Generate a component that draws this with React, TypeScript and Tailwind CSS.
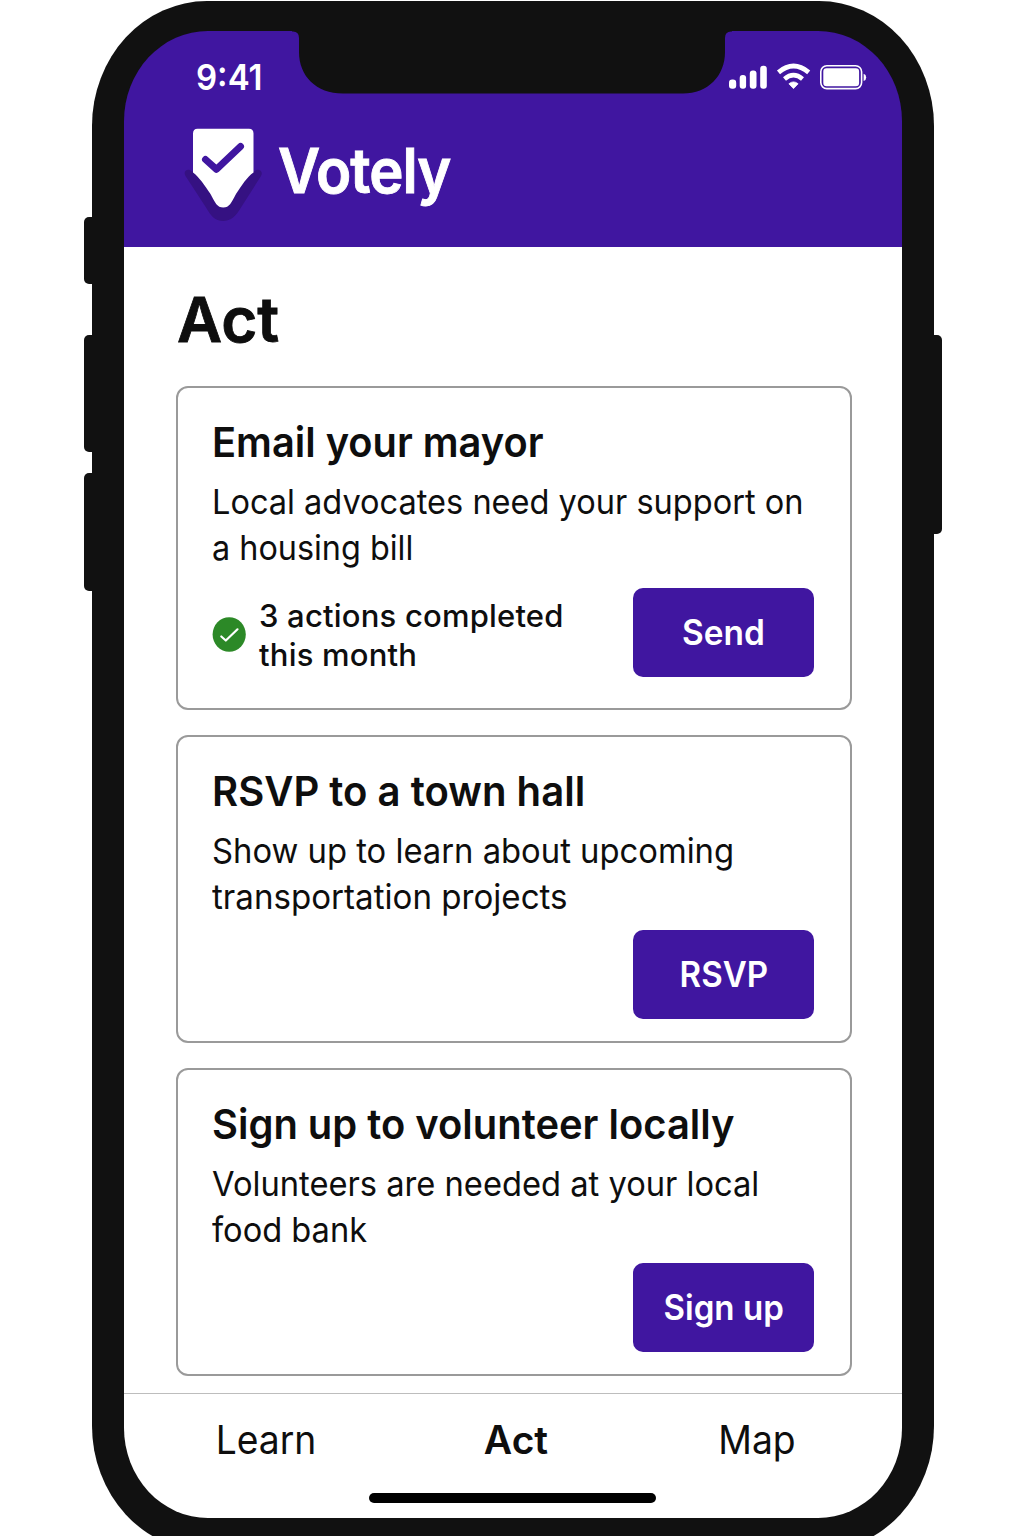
import React from "react";

function StatusIcons() {
  return (
    <svg className="block h-[30px] w-[140px]" viewBox="728 61 140 30" fill="none">
      <g fill="#fff">
        <rect x="729" y="78.5" width="7.2" height="9.3" rx="3.2" />
        <rect x="739.7" y="74" width="6.4" height="13.8" rx="3" />
        <rect x="749.8" y="69.5" width="6.7" height="18.3" rx="3" />
        <rect x="760.2" y="64.8" width="6.6" height="23" rx="3" />
        <path d="M793.5 87.600 L788.9 82.800 Q793.5 79 798.1 82.800 Z" stroke="#fff" strokeWidth="0.8" strokeLinejoin="round" />
      </g>
      <path d="M778.5 71.300 Q793.5 58.900 808.7 71.300" stroke="#fff" strokeWidth="4.8" />
      <path d="M784.500 77.900 Q793.5 70.300 802.500 77.900" stroke="#fff" strokeWidth="4.600" />
      <rect x="820.8" y="64.8" width="40.8" height="22.8" rx="6" stroke="#fff" strokeWidth="1.6" />
      <rect x="823.3" y="67.2" width="35.8" height="18" rx="3.2" fill="#fff" />
      <path d="M863.6 72.8 Q866.2 73.6 866.2 76.4 Q866.2 79.2 863.6 80 Z" fill="#fff" />
    </svg>
  );
}

function Logo() {
  return (
    <svg className="block h-[96px] w-[80px] shrink-0" viewBox="183 127 80 96" fill="none">
      <path
        d="M192 171.500 C188 167.500 182.500 171 185.500 176 L206 207.500 C211 216 215 221 223 221 C231 221 236 216 241 207.500 L261 176 C264 171 258 167.500 254 171.500 Z"
        fill="#351182"
      />
      <path
        d="M197.500 128.800 H249 Q253.500 128.800 253.500 133.500 V172.500 C247 177 242 185 236 194 C231 203 229.500 207.500 223.300 207.500 C217 207.500 215.500 203 210.500 194 C204.500 185 199 177 193 172.500 V133.500 Q193 128.800 197.500 128.800 Z"
        fill="#fff"
      />
      <path d="M205.500 159.500 L216.500 169.300 L240.500 146.500" stroke="#4016a0" strokeWidth="7" strokeLinecap="round" strokeLinejoin="round" />
    </svg>
  );
}

function Notch() {
  return (
    <svg className="absolute left-[168px] top-0 h-[63px] w-[440px]" viewBox="292 31 440 63">
      <path
        d="M292 30 V31.500 H293 Q299 31.500 299 38 V52 C299 76 316 93.500 343 93.500 H683 C708 93.500 725 76 725 52 V38 Q725 31.500 731 31.500 H732 V30 Z"
        fill="#111"
      />
    </svg>
  );
}

function CheckBadge() {
  return (
    <svg className="mt-[3px] block h-[35px] w-[34px] shrink-0" viewBox="0 0 34 35" fill="none">
      <ellipse cx="17.200" cy="17.500" rx="16.600" ry="17.200" fill="#2c8927" />
      <path d="M9.300 19.500 L13.800 23.500 L25.500 12.300" stroke="#fff" strokeWidth="2.200" strokeLinecap="round" strokeLinejoin="round" />
    </svg>
  );
}

type CardProps = {
  title: string;
  titleClass: string;
  lines: { text: string; className: string }[];
  action: string;
  actionClass: string;
  className: string;
  footerClass: string;
  children?: React.ReactNode;
};

function ActionCard({ title, titleClass, lines, action, actionClass, className, footerClass, children }: CardProps) {
  return (
    <section className={"rounded-[12px] border-2 border-[#9a9a9a] pl-[34px] pr-[36px] pt-[29px] " + className}>
      <h2 className={"origin-left whitespace-nowrap text-[41.500px] font-semibold leading-[50px] " + titleClass}>{title}</h2>
      <div className="mt-[12px] text-[34.500px] font-normal leading-[45.500px]">
        {lines.map((l) => (
          <p key={l.text} className={"origin-left whitespace-nowrap " + l.className}>{l.text}</p>
        ))}
      </div>
      <div className={"flex " + footerClass}>
        {children}
        <button className="ml-auto h-[89px] w-[181px] shrink-0 whitespace-nowrap rounded-[10px] bg-[#4016a0] text-[35px] text-white">
          <span className={"inline-block " + actionClass}>{action}</span>
        </button>
      </div>
    </section>
  );
}

export default function App() {
  return (
    <div className="relative h-[1536px] w-[1024px] overflow-hidden bg-white font-['Inter',sans-serif] text-[#0e0e0e]">
      <div className="absolute left-[84px] top-[217px] h-[67px] w-[20px] rounded-[5px] bg-[#111]" />
      <div className="absolute left-[84px] top-[335px] h-[117px] w-[20px] rounded-[5px] bg-[#111]" />
      <div className="absolute left-[84px] top-[473px] h-[118px] w-[20px] rounded-[5px] bg-[#111]" />
      <div className="absolute left-[922px] top-[335px] h-[199px] w-[20px] rounded-[5px] bg-[#111]" />

      <div className="relative ml-[92px] mt-px h-[1550px] w-[842px] rounded-[115px/125px] bg-[#111] pl-[32px] pt-[30px]">
        <div className="relative flex h-[1487px] w-[778px] flex-col overflow-hidden rounded-[84px/90px]">
          <header className="h-[216px] shrink-0 bg-[#4016a0] text-white">
            <div className="flex h-[92px] items-center justify-between pl-[72px] pr-[34px]">
              <span className="mt-[2px] origin-left scale-x-[0.93] text-[35.500px] font-semibold leading-[40px]">9:41</span>
              <StatusIcons />
            </div>
            <div className="flex pl-[59px] pt-[4px]">
              <Logo />
              <span className="ml-[15px] mt-[8px] origin-left scale-x-[0.935] text-[62px] font-semibold leading-[72px] tracking-[-1px] [-webkit-text-stroke:0.9px_#fff]">Votely</span>
            </div>
          </header>
          <Notch />

          <main className="flex flex-1 flex-col bg-white pl-[53px] pt-[41px]">
            <h1 className="text-[62px] font-semibold leading-[64px] [-webkit-text-stroke:0.8px_#0e0e0e]">Act</h1>
            <div className="-ml-px mt-[34px] flex w-[676px] flex-col gap-[25px]">
              <ActionCard
                className="h-[324px]"
                title="Email your mayor"
                titleClass="scale-x-[0.959]"
                lines={[
                  { text: "Local advocates need your support on", className: "scale-x-[0.943]" },
                  { text: "a housing bill", className: "scale-x-[0.938]" },
                ]}
                action="Send"
                actionClass="font-semibold scale-x-[0.955]"
                footerClass="mt-[18px] items-center"
              >
                <CheckBadge />
                <div className="ml-[13px] mt-[4px] whitespace-nowrap text-[31px] font-medium leading-[39px] tracking-[0.200px]">
                  <p>3 actions completed</p>
                  <p>this month</p>
                </div>
              </ActionCard>
              <ActionCard
                className="h-[308px]"
                title="RSVP to a town hall"
                titleClass="scale-x-[0.966]"
                lines={[
                  { text: "Show up to learn about upcoming", className: "scale-x-[0.95]" },
                  { text: "transportation projects", className: "scale-x-[0.96]" },
                ]}
                action="RSVP"
                actionClass="font-semibold scale-x-[0.945]"
                footerClass="mt-[11px]"
              />
              <ActionCard
                className="h-[308px]"
                title="Sign up to volunteer locally"
                titleClass="scale-x-[0.962]"
                lines={[
                  { text: "Volunteers are needed at your local", className: "scale-x-[0.947]" },
                  { text: "food bank", className: "scale-x-[0.945]" },
                ]}
                action="Sign up"
                actionClass="font-semibold scale-x-[0.945]"
                footerClass="mt-[11px]"
              />
            </div>
          </main>

          <nav className="flex h-[125px] shrink-0 flex-col items-center border-t border-[#bdbdbd] bg-white">
            <div className="flex w-full pl-[17px] pt-[21px] text-center text-[39px] leading-[50px]">
              <span className="w-[250px] scale-x-[0.955] font-normal">Learn</span>
              <span className="w-[250px] font-semibold">Act</span>
              <span className="w-[232px] scale-x-[0.955] font-normal">Map</span>
            </div>
            <div className="mr-[2px] mt-[28px] h-[10px] w-[287px] rounded-full bg-black" />
          </nav>
        </div>
      </div>
    </div>
  );
}
